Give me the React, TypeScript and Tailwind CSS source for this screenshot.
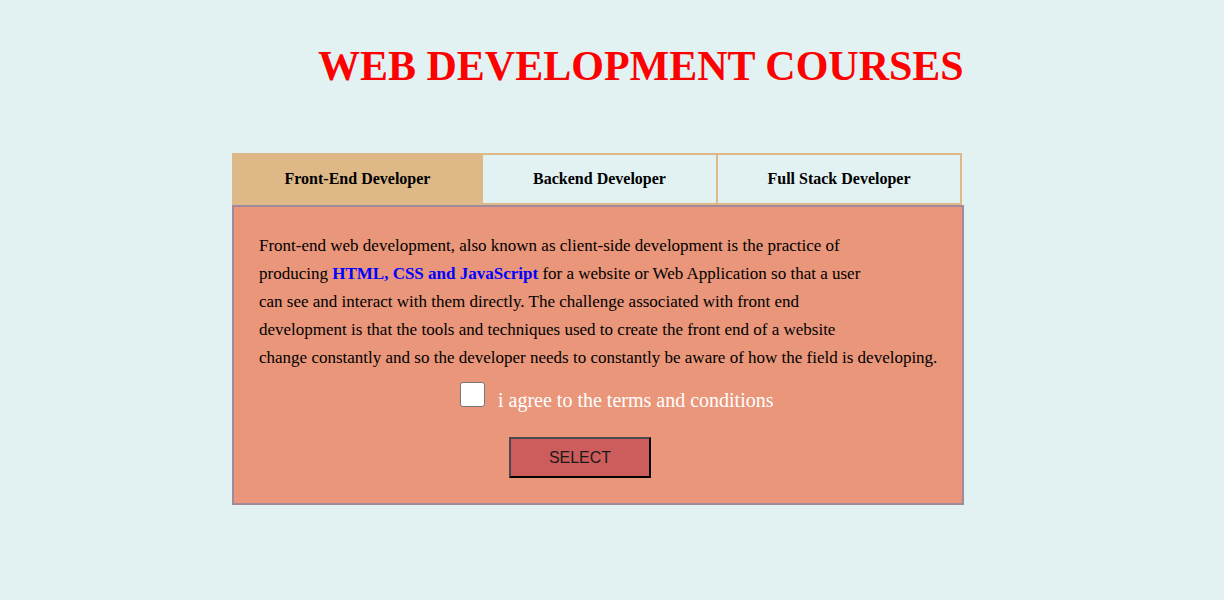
import React, { useState } from "react";

const tabs = ["Front-End Developer", "Backend Developer", "Full Stack Developer"];

const App: React.FC = () => {
  const [active, setActive] = useState(0);
  const [agree, setAgree] = useState(false);

  return (
    <div className="min-h-[600px] w-full bg-[#e2f2f2] font-['Liberation_Serif',serif] text-black">
      {/* Heading */}
      <div className="pt-[40px] pl-[318px]">
        <h1 className="text-[42px] font-bold leading-[52px] text-[#ff0000]">WEB DEVELOPMENT COURSES</h1>
      </div>

      <div className="mt-[61px] ml-[232px] w-[732px]">
        {/* Tabs */}
        <div className="flex h-[52px] w-[730px] border-2 border-[#deb887]">
          {tabs.map((t, i) => (
            <button
              key={t}
              onClick={() => setActive(i)}
              className={
                (i === active ? "bg-[#deb887] " : "bg-[#e2f2f2] ") +
                (i === 0 ? "w-[247px] " : i === 1 ? "w-[235px] border-l-2 border-[#deb887] " : "flex-1 border-l-2 border-[#deb887] ") +
                "flex items-center justify-center text-[16px] font-bold"
              }
            >
              {t}
            </button>
          ))}
        </div>

        {/* Panel */}
        <div className="h-[300px] border-2 border-[#a08b9c] bg-[#e9967a] pl-[25px] pt-[25px]">
          <p className="text-[17px] leading-[28px]">
            Front-end web development, also known as client-side development is the practice of
            <br />
            producing <b className="text-[#0000ff]">HTML, CSS and JavaScript</b> for a website or Web Application so that a user
            <br />
            can see and interact with them directly. The challenge associated with front end
            <br />
            development is that the tools and techniques used to create the front end of a website
            <br />
            change constantly and so the developer needs to constantly be aware of how the field is developing.
          </p>

          <label className="mt-[10px] ml-[201px] flex items-start gap-[13px]">
            <input
              type="checkbox"
              checked={agree}
              onChange={(e) => setAgree(e.target.checked)}
              className="h-[25px] w-[25px] appearance-none rounded-[3px] border border-[#767676] bg-white checked:bg-[#0075ff]"
            />
            <span className="pt-[4px] text-[20px] leading-[28px] text-white">i agree to the terms and conditions</span>
          </label>

          <button className="mt-[23px] ml-[250px] flex h-[41px] w-[142px] items-center justify-center border-2 border-t-[#4a4a4a] border-l-[#4a4a4a] border-r-black border-b-black bg-[#cd5c5c] font-['Liberation_Sans',sans-serif] text-[16px] text-[#1a1a1a]">
            SELECT
          </button>
        </div>
      </div>
    </div>
  );
};

export default App;
